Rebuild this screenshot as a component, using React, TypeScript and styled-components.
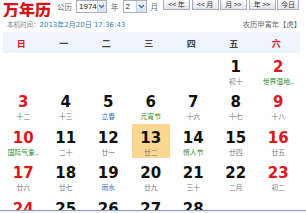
import styled, { createGlobalStyle } from 'styled-components';

const GlobalStyle = createGlobalStyle`
  html, body {
    margin: 0;
    padding: 0;
    background: #f4f6f9;
    overflow: hidden;
  }
`;

const sans = `"DejaVu Sans", "Noto Sans CJK SC", sans-serif`;
const cjk = `"Noto Sans CJK SC", "DejaVu Sans", sans-serif`;

const Page = styled.div`
  width: 306px;
  height: 210px;
  overflow: hidden;
  background: #fff;
  border-bottom: 1px solid #8a9bb4;
`;

const TopBar = styled.div`
  display: flex;
  align-items: flex-start;
  height: 19px;
  white-space: nowrap;
  & > * {
    flex-shrink: 0;
  }
`;

const Title = styled.div`
  font-family: ${cjk};
  font-weight: 900;
  font-size: 16px;
  line-height: 16px;
  color: #d3141b;
  padding-left: 3px;
  margin-top: 1px;
  width: 50px;
  overflow: hidden;
`;

const Controls = styled.div`
  display: flex;
  align-items: flex-start;
  margin-left: 4px;
`;

const Label = styled.span`
  font-family: ${cjk};
  font-size: 7.5px;
  line-height: 13px;
  color: #666;
  margin: 0 4px 0 0;
`;

const Select = styled.div<{ $w: number }>`
  display: flex;
  align-items: stretch;
  flex-shrink: 0;
  box-sizing: border-box;
  width: ${(p) => p.$w}px;
  height: 13px;
  border: 1px solid #a9b0ba;
  background: #fff;
  margin-right: 4px;
  .value {
    flex: 1;
    font-family: "Liberation Sans", sans-serif;
    font-size: 8px;
    line-height: 11px;
    color: #222;
    padding-left: 2px;
  }
  .arrow {
    width: 9px;
    display: flex;
    align-items: center;
    justify-content: center;
    background: linear-gradient(#eef3fa, #d6e2f1);
    border-left: 1px solid #c3cedc;
  }
`;

const Buttons = styled.div`
  display: flex;
  gap: 1.5px;
  margin-left: 1px;
`;

const NavButton = styled.div<{ $w: number }>`
  box-sizing: border-box;
  flex-shrink: 0;
  width: ${(p) => p.$w}px;
  height: 10px;
  border: 1px solid #a7afbb;
  border-top: none;
  background: linear-gradient(#fbfbfb, #e2e4e8);
  font-family: ${cjk};
  font-size: 7px;
  line-height: 9px;
  color: #333;
  text-align: center;
  white-space: nowrap;
`;

const InfoRow = styled.div`
  display: flex;
  justify-content: space-between;
  align-items: center;
  height: 11px;
  padding: 0 5px 0 7px;
  white-space: nowrap;
`;

const Clock = styled.div`
  font-size: 6.5px;
  line-height: 9px;
  color: #888;
  font-family: ${cjk};
  .time {
    font-family: ${sans};
    font-size: 7px;
    color: #3c7db3;
  }
`;

const Lunar = styled.div`
  font-family: ${cjk};
  font-size: 7.3px;
  line-height: 9px;
  color: #666;
`;

const WeekBand = styled.div`
  display: grid;
  grid-template-columns: repeat(7, 42.5px);
  height: 20.5px;
  margin: 2px 6px 0 3px;
  background: #eef4fb;
`;

const WeekDay = styled.div<{ $weekend: boolean }>`
  font-family: ${cjk};
  font-weight: 700;
  font-size: 9px;
  line-height: 20px;
  padding: 2px 6px 0 0;
  text-align: center;
  color: ${(p) => (p.$weekend ? '#e0141b' : '#444')};
`;

const DayGrid = styled.div`
  display: grid;
  grid-template-columns: repeat(7, 42.5px);
  grid-auto-rows: 35.5px;
`;

const Cell = styled.div`
  padding-left: 4px;
  display: flex;
  justify-content: center;
  align-items: flex-start;
`;

const Day = styled.div<{ $today: boolean }>`
  width: 38px;
  height: 34px;
  margin-top: 0.5px;
  background: ${(p) => (p.$today ? '#fbd891' : 'transparent')};
  text-align: center;
  overflow: hidden;
`;

const Num = styled.div<{ $weekend: boolean }>`
  font-family: ${sans};
  font-weight: 700;
  font-size: 15px;
  line-height: 15px;
  padding-top: 6.5px;
  color: ${(p) => (p.$weekend ? '#e0141b' : '#111')};
`;

const Sub = styled.div<{ $kind: 'lunar' | 'fest' | 'term' }>`
  font-family: ${cjk};
  font-size: 6.8px;
  line-height: 8px;
  margin-top: 2px;
  white-space: nowrap;
  color: ${(p) =>
    p.$kind === 'fest' ? '#2d8a2d' : p.$kind === 'term' ? '#3a74b8' : '#777'};
`;

const Chevron = () => (
  <svg width='7' height='5' viewBox='0 0 7 5'>
    <path d='M1 1 L3.5 3.6 L6 1' fill='none' stroke='#4d72a8' strokeWidth='1.4' />
  </svg>
);

type Kind = 'lunar' | 'fest' | 'term';
const days: [string, Kind][] = [
  ['初十', 'lunar'],
  ['世界湿地..', 'fest'],
  ['十二', 'lunar'],
  ['十三', 'lunar'],
  ['立春', 'term'],
  ['元宵节', 'fest'],
  ['十六', 'lunar'],
  ['十七', 'lunar'],
  ['十八', 'lunar'],
  ['国际气象..', 'fest'],
  ['二十', 'lunar'],
  ['廿一', 'lunar'],
  ['廿二', 'lunar'],
  ['情人节', 'fest'],
  ['廿四', 'lunar'],
  ['廿五', 'lunar'],
  ['廿六', 'lunar'],
  ['廿七', 'lunar'],
  ['雨水', 'term'],
  ['廿九', 'lunar'],
  ['三十', 'lunar'],
  ['二月', 'lunar'],
  ['初二', 'lunar'],
  ['初三', 'lunar'],
  ['初四', 'lunar'],
  ['初五', 'lunar'],
  ['初六', 'lunar'],
  ['初七', 'lunar'],
];

const weekNames = ['日', '一', '二', '三', '四', '五', '六'];
const offset = 5;

export default function App() {
  const cells: (number | null)[] = [];
  for (let i = 0; i < offset; i++) cells.push(null);
  days.forEach((_, i) => cells.push(i + 1));
  while (cells.length % 7) cells.push(null);

  return (
    <>
      <GlobalStyle />
      <Page>
        <TopBar>
          <Title>万年历</Title>
          <Controls>
            <Label>公历</Label>
            <Select $w={31}>
              <span className='value'>1974</span>
              <span className='arrow'>
                <Chevron />
              </span>
            </Select>
            <Label>年</Label>
            <Select $w={24}>
              <span className='value'>2</span>
              <span className='arrow'>
                <Chevron />
              </span>
            </Select>
            <Label>月</Label>
          </Controls>
          <Buttons>
            <NavButton $w={27}>&lt;&lt; 年</NavButton>
            <NavButton $w={27}>&lt;&lt; 月</NavButton>
            <NavButton $w={27}>月 &gt;&gt;</NavButton>
            <NavButton $w={27}>年 &gt;&gt;</NavButton>
            <NavButton $w={22}>今日</NavButton>
          </Buttons>
        </TopBar>
        <InfoRow>
          <Clock>
            本机时间：<span className='time'>2013年2月20日 17:36:43</span>
          </Clock>
          <Lunar>农历甲寅年【虎】</Lunar>
        </InfoRow>
        <WeekBand>
          {weekNames.map((w, i) => (
            <WeekDay key={w} $weekend={i === 0 || i === 6}>
              {w}
            </WeekDay>
          ))}
        </WeekBand>
        <DayGrid>
          {cells.map((d, i) => {
            const col = i % 7;
            return (
              <Cell key={i}>
                {d !== null && (
                  <Day $today={d === 13}>
                    <Num $weekend={col === 0 || col === 6}>{d}</Num>
                    <Sub $kind={days[d - 1][1]}>{days[d - 1][0]}</Sub>
                  </Day>
                )}
              </Cell>
            );
          })}
        </DayGrid>
      </Page>
    </>
  );
}
